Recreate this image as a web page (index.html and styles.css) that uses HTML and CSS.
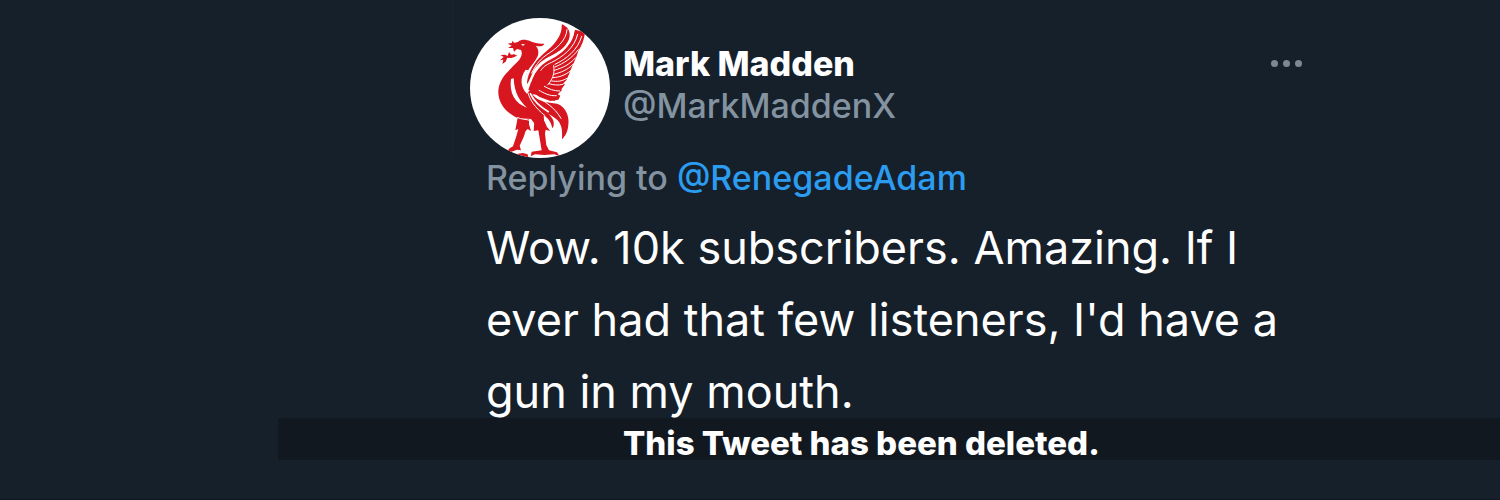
FILE: index.html
```
<!DOCTYPE html>
<html lang="en">
<head>
    <meta charset="UTF-8">
    <meta name="viewport" content="width=device-width, initial-scale=1.0">
    <title>Mark Madden</title>
    <link rel="stylesheet" href="styles.css">
</head>
<body>
    <main class="thread">
        <article class="tweet">
            <header class="tweet-header">
                <svg class="avatar" viewBox="31 23 420 420" role="img" aria-label="Red liver bird">
                    <rect x="31" y="23" width="420" height="420" fill="#fff"/>
                    <g fill="#d8161f">
                        <!-- head, neck and body -->
                        <path d="M254 100 C250 108 240 110 228 106 C236 114 238 126 234 138 C226 156 210 170 202 186 C192 206 192 230 206 244 L246 214 L296 262 L284 272 L246 254 L218 252 L222 270 C238 278 250 294 252 312 L254 346 L228 344 L214 326 L172 322 C138 306 114 278 116 240 C120 200 148 182 172 156 C184 144 190 130 184 119 L172 116 L163 124 L160 113 L145 113 L156 106 L144 100 L157 98 L158 91 L164 98 L176 94 C186 86 200 88 212 93 C226 99 240 102 254 100 Z"/>
                        <!-- sprig in the beak -->
                        <path d="M172 136 C160 143 150 144 143 142 L138 154 L128 161 L131 148 L121 150 L132 140 L122 134 L136 133 L144 137 L148 125 L154 133 L164 132 L173 137 Z"/>
                        <!-- wing -->
                        <path d="M306 42 C322 48 332 60 330 78 C326 104 302 124 274 136 C250 148 234 160 222 180 L208 212 L202 222 C202 200 212 178 226 158 C240 138 264 122 282 102 C298 84 308 64 306 42 Z"/>
                        <path d="M346 58 L376 66 C374 88 366 106 356 122 L350 140 L342 158 L334 176 L328 192 L320 210 L310 220 L316 222 L304 238 L308 238 L294 252 L302 256 L296 268 L272 272 L240 260 L206 238 L214 216 C222 190 240 166 264 152 C300 134 334 112 346 58 Z"/>
                        <!-- tail -->
                        <path d="M216 250 C236 276 264 276 292 280 C318 288 330 318 326 344 C324 366 316 378 307 387 C308 364 308 346 294 330 C276 312 244 302 228 280 Z"/>
                        <path d="M236 290 C256 300 272 312 280 328 C284 338 283 348 278 354 C274 332 262 318 244 312 Z"/>
                        <!-- legs -->
                        <path d="M174 322 L208 326 L208 342 L214 362 L204 356 L198 362 L192 380 L180 406 L184 420 L172 418 L156 424 L140 426 L150 414 L160 408 L170 378 L176 356 L167 360 Z"/>
                        <path d="M224 332 L254 332 L262 350 L272 362 L258 358 L256 370 L260 404 L268 420 L292 426 L300 438 L284 432 L254 434 L226 432 L213 438 L216 424 L246 420 L240 384 L236 360 L222 362 Z"/>
                        <path d="M166 432 L190 428 L204 432 L206 442 L166 442 Z"/>
                    </g>
                    <g fill="none" stroke="#fff" stroke-width="3" stroke-linecap="round">
                        <path d="M322 58 C320 92 288 116 260 134 C238 150 226 168 216 188"/>
                        <path d="M340 72 C330 112 292 132 264 146 C240 158 224 180 212 214" stroke-width="5"/>
                        <path d="M354 72 C344 114 308 140 276 156 C258 164 250 170 244 180"/>
                        <path d="M366 78 C354 120 320 146 286 162"/>
                        <path d="M356 118 C336 144 314 158 286 170"/>
                        <path d="M348 142 C328 164 310 172 284 180"/>
                        <path d="M340 162 C322 180 304 186 282 192"/>
                        <path d="M332 182 C314 196 300 200 280 202"/>
                        <path d="M322 204 C304 214 294 214 276 212"/>
                        <path d="M310 222 C294 226 282 224 268 220"/>
                        <path d="M300 242 C282 242 268 236 254 228"/>
                        <path d="M290 256 C270 258 252 248 238 240"/>
                        <path d="M282 166 C286 190 278 208 264 224"/>
                        <path d="M212 250 C224 276 242 290 266 304" stroke-width="5"/>
                        <path d="M232 258 C254 276 282 286 304 324"/>
                        <path d="M204 246 C212 270 224 290 256 316"/>
                        <path d="M174 322 C188 328 198 326 210 330"/>
                    </g>
                    <path d="M154 206 C148 248 166 280 202 292 C182 274 164 250 162 204 Z" fill="#fff"/>
                    <path d="M198 178 C180 202 182 230 202 250 L207 242 C194 224 192 204 206 180 Z" fill="#fff"/>
                    <path d="M184 101 L196 102 L190 107 Z" fill="#fff"/>
                </svg>
                <div class="names">
                    <h1 class="name">Mark Madden</h1>
                    <p class="handle">@MarkMaddenX</p>
                </div>
                <button class="more" type="button" aria-label="More">
                    <span class="dot"></span>
                    <span class="dot"></span>
                    <span class="dot"></span>
                </button>
            </header>
            <div class="tweet-body">
                <p class="reply">Replying to <a href="#">@RenegadeAdam</a></p>
                <p class="text">Wow. 10k subscribers. Amazing. If I ever had that few listeners, I'd have a gun in my mouth.</p>
            </div>
        </article>
        <p class="deleted">This Tweet has been deleted.</p>
    </main>
</body>
</html>
```

FILE: styles.css
```
body {
    margin: 0;
    background-color: #16202b;
    color: #fff;
    font-family: Inter, "Liberation Sans", sans-serif;
}
h1, p {
    margin: 0;
}
.thread {
    box-sizing: border-box;
    min-height: 100vh;
    padding-left: 278px;
    border-bottom: 1px solid #101820;
}
/* the text descends into the notice bar, keep it on top */
.tweet {
    position: relative;
    z-index: 1;
    max-width: 850px;
    margin-left: 174px;
}
.tweet-header {
    display: flex;
    align-items: flex-start;
    gap: 13px;
    padding: 18px 0 0 17px;
    border-left: 1px solid #1a242f;
}
.avatar {
    flex: none;
    width: 140px;
    height: 140px;
    border-radius: 50%;
}
.names {
    flex: 1;
    padding-top: 25px;
}
.name {
    font-size: 34px;
    line-height: 42px;
    font-weight: 800;
}
.handle {
    color: #8493a0;
    font-size: 34px;
    line-height: 42px;
    font-weight: 500;
}
.more {
    display: flex;
    gap: 5px;
    margin-top: 42px;
    padding: 0;
    border: none;
    background: none;
    cursor: pointer;
}
.dot {
    width: 7px;
    height: 7px;
    border-radius: 50%;
    background-color: #7c8894;
}
.tweet-body {
    padding-left: 34px;
}
.reply {
    color: #8493a0;
    font-size: 34px;
    line-height: 40px;
    font-weight: 500;
}
.reply a {
    color: #2b9cef;
    text-decoration: none;
}
.text {
    padding-top: 14px;
    font-size: 45px;
    line-height: 72px;
    font-weight: 400;
}
.deleted {
    margin-top: -10px;
    padding: 9px 0 0 345px;
    background-color: #11181f;
    font-size: 33px;
    line-height: 33px;
    font-weight: 800;
}
```
